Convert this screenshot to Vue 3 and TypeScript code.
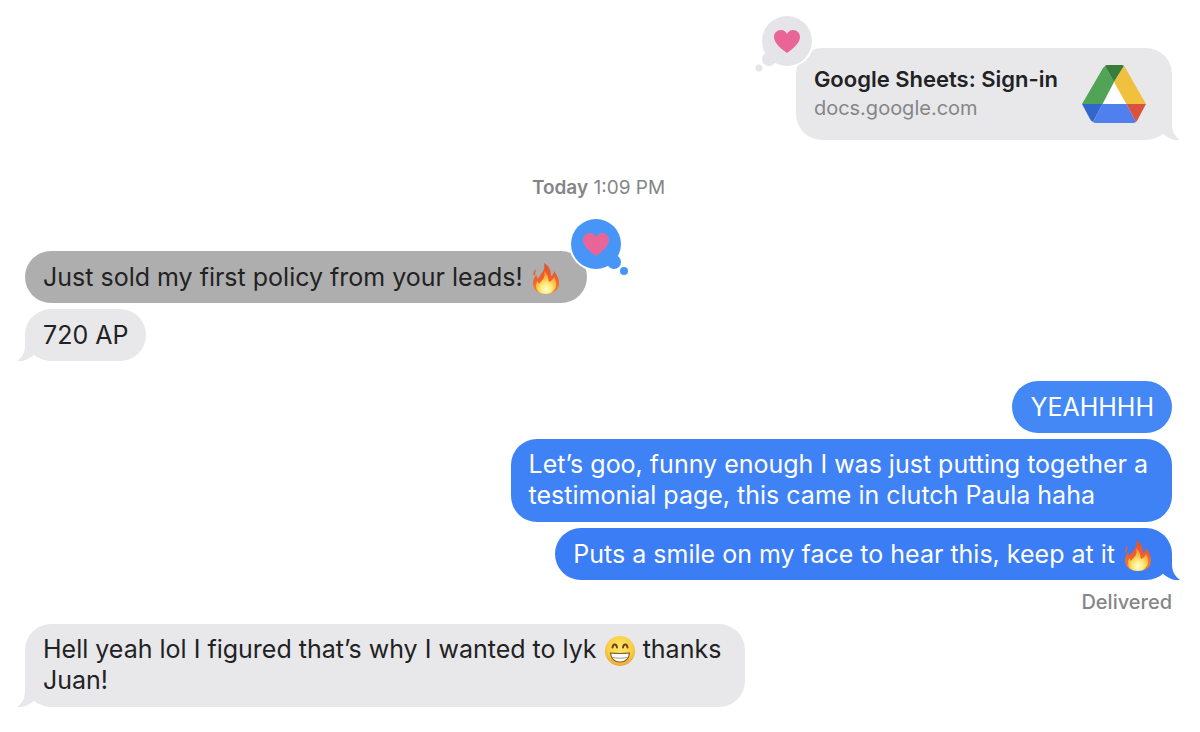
<script setup lang="ts">
type Part = { kind: 'text'; value: string } | { kind: 'fire' } | { kind: 'grin' } | { kind: 'break' }

interface Message {
  id: number
  side: 'in' | 'out'
  tone: string
  tail?: boolean
  loved?: boolean
  multiline?: boolean
  parts: Part[]
}

const text = (value: string): Part => ({ kind: 'text', value })

const groups: { id: string; receipt?: string; messages: Message[] }[] = [
  {
    id: 'sale',
    messages: [
      { id: 1, side: 'in', tone: 'selected', loved: true, parts: [text('Just sold my first policy from your leads! '), { kind: 'fire' }, text('\u00a0')] },
      { id: 2, side: 'in', tone: 'grey', tail: true, parts: [text('720 AP')] },
    ],
  },
  {
    id: 'cheer',
    receipt: 'Delivered',
    messages: [
      { id: 3, side: 'out', tone: 'blue-1', parts: [text('YEAHHHH')] },
      { id: 4, side: 'out', tone: 'blue-2', multiline: true, parts: [text('Let’s goo, funny enough I was just putting together a'), { kind: 'break' }, text('testimonial page, this came in clutch Paula haha')] },
      { id: 5, side: 'out', tone: 'blue-3', tail: true, parts: [text('Puts a smile on my face to hear this, keep at it '), { kind: 'fire' }] },
    ],
  },
  {
    id: 'thanks',
    messages: [
      { id: 6, side: 'in', tone: 'grey', tail: true, multiline: true, parts: [text('Hell yeah lol I figured that’s why I wanted to lyk '), { kind: 'grin' }, text(' thanks'), { kind: 'break' }, text('Juan!')] },
    ],
  },
]
</script>

<template>
  <main class="chat">
    <svg class="defs" aria-hidden="true">
      <defs>
        <linearGradient id="flame" x1="0" y1="0" x2="0" y2="1">
          <stop offset="0" stop-color="#e4502f" />
          <stop offset="0.55" stop-color="#f0622c" />
          <stop offset="1" stop-color="#f68a2c" />
        </linearGradient>
        <radialGradient id="flame-core" cx="0.5" cy="0.8" r="0.75">
          <stop offset="0" stop-color="#fffcd6" />
          <stop offset="0.35" stop-color="#fdec7a" />
          <stop offset="0.7" stop-color="#fbb840" />
          <stop offset="1" stop-color="#f78a35" />
        </radialGradient>
        <radialGradient id="face" cx="0.5" cy="0.4" r="0.6">
          <stop offset="0" stop-color="#ffe76a" />
          <stop offset="0.7" stop-color="#fbce45" />
          <stop offset="1" stop-color="#eba22f" />
        </radialGradient>
      </defs>
    </svg>

    <section class="row out">
      <a class="bubble card tone-grey" href="#">
        <span class="card-text">
          <strong>Google Sheets: Sign-in</strong>
          <small>docs.google.com</small>
        </span>
        <svg class="drive" viewBox="0 0 64 58" aria-hidden="true">
          <path d="M32 17 20.500 39H44.500Z" fill="#fff" />
          <path d="M24 1Q22 1 21 3L0 39H20.500L32 17 23 1Z" fill="#51a456" />
          <path d="M23 1Q24 0 25 0H40Q41 0 42 1L32 17Z" fill="#387d3c" />
          <path d="M42 1Q43 2 44 4L64 39H44.500L32 17Z" fill="#f2c03f" />
          <path d="M0 39H20.500L11 57Q9 56 8 54Z" fill="#3366cc" />
          <path d="M20.500 39H44.500L54 57Q53 58 51 58H14Q12 58 11 57Z" fill="#4f80ed" />
          <path d="M44.500 39H64L56 54Q55 56 54 57Z" fill="#db5140" />
        </svg>
        <svg class="tail" viewBox="0 0 34 26" aria-hidden="true">
          <path d="M8 0H26V10C26 18 29 22 34 26C28 27 22 24 17 20Z" />
        </svg>
        <svg class="reaction reaction-grey" viewBox="0 0 60 60" role="img" aria-label="Loved">
          <g class="ring"><circle cx="33" cy="27" r="27" /></g>
          <g class="cloud">
            <circle cx="33" cy="27" r="25" />
            <circle cx="15" cy="45" r="7" />
            <circle cx="5" cy="54" r="3.500" />
          </g>
          <path class="heart" d="M33 39C29 36 20 30 20 23C20 19 23 16 27 16C30 16 32 18 33 20C34 18 36 16 39 16C43 16 46 19 46 23C46 30 37 36 33 39Z" />
        </svg>
      </a>
    </section>

    <p class="stamp"><b>Today</b> 1:09 PM</p>

    <section v-for="group in groups" :key="group.id" class="group">
      <div v-for="m in group.messages" :key="m.id" class="row" :class="m.side">
        <p class="bubble" :class="['tone-' + m.tone, { multiline: m.multiline }]"><template v-for="(part, i) in m.parts" :key="i"><span v-if="part.kind === 'text'">{{ part.value }}</span><br v-else-if="part.kind === 'break'" /><svg v-else-if="part.kind === 'fire'" class="emoji" viewBox="0 0 34 34" role="img" aria-label="fire"><path d="M15 1C20 4 22 8 22 14C24 13 25 11 25 9C28 13 30 17 30 21C30 28 25 32 17 32C9 32 4 28 4 21C4 17 6 15 7 13C8 14 8 16 9 17C11 12 17 9 15 1Z" fill="url(#flame)" /><path d="M7 7C4 9 4 12 5 14C7 12 6 10 7 7Z" fill="#e9613b" /><path d="M15 9C19 12 19 16 20 20C23 19 24 17 25 15C28 20 28 25 25 28C23 31 20 32 17 32C11 32 7 29 7 24C7 22 8 20 8 19C9 20 9 21 10 22C13 18 17 16 15 9Z" fill="url(#flame-core)" /></svg><svg v-else class="emoji" viewBox="0 0 34 34" role="img" aria-label="grinning face"><circle cx="17" cy="17" r="15" fill="url(#face)" /><path d="M9.500 13.500C10 9.500 13.500 9.500 14 13.500M20 13.500C20.500 9.500 24 9.500 24.500 13.500" fill="none" stroke="#6b421c" stroke-width="2" stroke-linecap="round" /><path d="M7.500 19Q17 20 26.500 19C26 25 22 28 17 28S8 25 7.500 19Z" fill="#fff" stroke="#82602f" stroke-width="1.200" /><path d="M9 23.500Q17 25 25 23.500" fill="none" stroke="#a09a8c" stroke-width="1" /></svg></template><svg v-if="m.tail" class="tail" viewBox="0 0 34 26" aria-hidden="true"><path d="M8 0H26V10C26 18 29 22 34 26C28 27 22 24 17 20Z" /></svg><svg v-if="m.loved" class="reaction reaction-blue" viewBox="0 0 60 60" role="img" aria-label="Loved"><g class="ring"><circle cx="27" cy="27" r="27" /></g><g class="cloud"><circle cx="27" cy="27" r="25" /><circle cx="45" cy="45" r="7" /><circle cx="55" cy="54" r="4" /></g><path class="heart" d="M27 39C23 36 14 30 14 23C14 19 17 16 21 16C24 16 26 18 27 20C28 18 30 16 33 16C37 16 40 19 40 23C40 30 31 36 27 39Z" /></svg></p>
      </div>
      <p v-if="group.receipt" class="receipt">{{ group.receipt }}</p>
    </section>
  </main>
</template>

<style>
body {
  margin: 0;
  background: #fff;
}
</style>

<style scoped>
.chat {
  box-sizing: border-box;
  min-height: 100vh;
  padding: 48px 28px 24px 25px;
  background: #fff;
  color: #222224;
  font-family: Inter, "Liberation Sans", sans-serif;
  font-size: 25px;
  line-height: 31px;
}
.defs {
  position: absolute;
  width: 0;
  height: 0;
}
p {
  margin: 0;
}
.group {
  display: flex;
  flex-direction: column;
  gap: 6px;
  margin-top: 20px;
}
.row {
  display: flex;
}
.out {
  justify-content: flex-end;
}
.bubble {
  --tone: #e8e8ea;
  position: relative;
  padding: 11px 18px 10px;
  border-radius: 26px;
  background: var(--tone);
  white-space: pre-wrap;
}
.bubble.multiline {
  padding: 10px 24px 11px 18px;
}
.tone-selected {
  --tone: #aeaeae;
}
.tone-blue-1,
.tone-blue-2,
.tone-blue-3 {
  color: #fff;
}
.tone-blue-1 {
  --tone: #4488f6;
}
.tone-blue-2 {
  --tone: #3f82f5;
}
.tone-blue-3 {
  --tone: #3b7df4;
}
.bubble.card {
  display: flex;
  align-items: center;
  gap: 24px;
  padding: 17px 26px 17px 18px;
  color: inherit;
  text-decoration: none;
  white-space: normal;
}
.card-text {
  display: flex;
  flex-direction: column;
}
.card strong {
  font-size: 22px;
  font-weight: 600;
  line-height: 28px;
}
.card small {
  color: #858587;
  font-size: 20px;
  line-height: 30px;
}
.drive {
  width: 64px;
  height: 58px;
}
.emoji {
  width: 34px;
  height: 34px;
  margin: -4px -1px;
  vertical-align: -6px;
}
.tail {
  position: absolute;
  right: -8px;
  bottom: 0;
  width: 34px;
  height: 26px;
  fill: var(--tone);
}
.in .tail {
  right: auto;
  left: -8px;
  transform: scaleX(-1);
}
.reaction {
  position: absolute;
  width: 60px;
  height: 60px;
}
.reaction-grey {
  top: -34px;
  left: -42px;
}
.reaction-blue {
  top: -34px;
  right: -42px;
}
.ring {
  fill: #fff;
}
.reaction-grey .cloud {
  fill: #e5e5e9;
}
.reaction-blue .cloud {
  fill: #4795f7;
}
.heart {
  fill: #ea6597;
}
.stamp {
  margin-top: 33px;
  color: #858587;
  font-size: 19px;
  line-height: 30px;
  text-align: center;
}
.stamp b {
  font-weight: 600;
}
.stamp + .group {
  margin-top: 48px;
}
.receipt {
  margin-bottom: -13px;
  padding-top: 1px;
  color: #858587;
  font-size: 20px;
  font-weight: 500;
  line-height: 30px;
  text-align: right;
}
</style>
